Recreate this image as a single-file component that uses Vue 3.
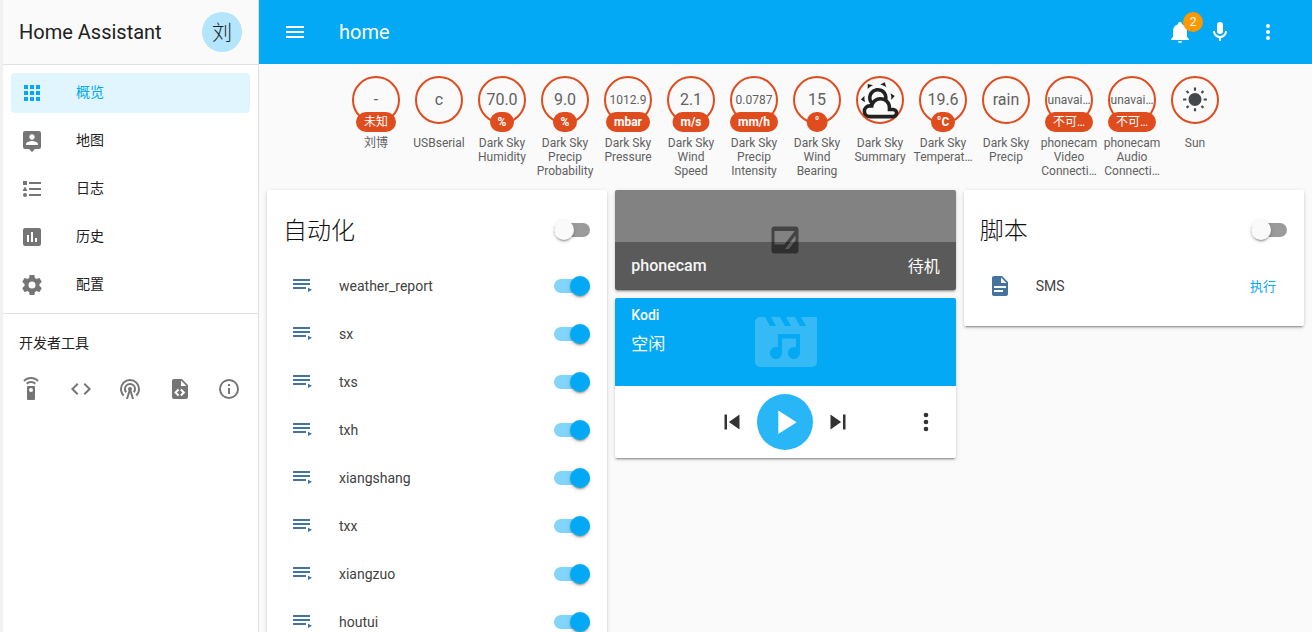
<template>
  <div class="app">
    <aside class="sidebar">
      <div class="side-head">
        <span class="brand">Home Assistant</span>
        <span class="avatar">刘</span>
      </div>
      <nav class="nav">
        <div v-for="item in navItems" :key="item.label" class="nav-item" :class="{ active: item.active }">
          <svg class="nav-icon" viewBox="0 0 24 24"><path :d="item.icon" fill-rule="evenodd" /></svg>
          <span class="nav-label">{{ item.label }}</span>
        </div>
      </nav>
      <div class="side-divider"></div>
      <div class="dev-title">开发者工具</div>
      <div class="dev-tools">
        <svg v-for="(d, i) in devIcons" :key="i" viewBox="0 0 24 24"><path :d="d" /></svg>
      </div>
    </aside>

    <main class="main">
      <header class="topbar">
        <svg class="top-icon" viewBox="0 0 24 24"><path :d="icons.menu" /></svg>
        <span class="top-title">home</span>
        <div class="top-actions">
          <div class="bell">
            <svg class="top-icon" viewBox="0 0 24 24"><path :d="icons.bell" /></svg>
            <span class="bell-count">2</span>
          </div>
          <svg class="top-icon mic" viewBox="0 0 24 24"><path :d="icons.mic" /></svg>
          <svg class="top-icon" viewBox="0 0 24 24"><path :d="icons.dots" /></svg>
        </div>
      </header>

      <section class="badges">
        <div v-for="b in badges" :key="b.name" class="badge">
          <div class="ring" :class="b.size">
            <svg v-if="b.icon" class="ring-icon" :class="b.iconClass" viewBox="0 0 24 24"><path :d="b.icon" fill-rule="evenodd" /></svg>
            <span v-else class="ring-value">{{ b.value }}</span>
            <span v-if="b.unit" class="pill" :class="b.pill">{{ b.unit }}</span>
          </div>
          <div class="badge-name" v-html="b.name"></div>
        </div>
      </section>

      <section class="columns">
        <div class="column">
          <div class="card">
            <div class="card-head">
              <span class="card-title">自动化</span>
              <span class="switch off"></span>
            </div>
            <div v-for="name in automations" :key="name" class="row">
              <svg class="row-icon" viewBox="0 0 24 24"><path :d="icons.playlist" /></svg>
              <span class="row-name">{{ name }}</span>
              <span class="switch on"></span>
            </div>
          </div>
        </div>

        <div class="column">
          <div class="card camera">
            <svg class="camera-icon" viewBox="0 0 24 24"><path :d="icons.broken" fill-rule="evenodd" /></svg>
            <div class="camera-foot">
              <span class="camera-name">phonecam</span>
              <span class="camera-state">待机</span>
            </div>
          </div>
          <div class="card media">
            <div class="media-top">
              <svg class="media-bg" viewBox="0 0 62 50"><path :d="icons.clapper" fill-rule="evenodd" /></svg>
              <div class="media-name">Kodi</div>
              <div class="media-state">空闲</div>
            </div>
            <div class="media-controls">
              <svg class="ctl" viewBox="0 0 24 24"><path :d="icons.prev" /></svg>
              <span class="play">
                <svg viewBox="0 0 24 24"><path :d="icons.play" /></svg>
              </span>
              <svg class="ctl" viewBox="0 0 24 24"><path :d="icons.next" /></svg>
              <svg class="more" viewBox="0 0 24 24"><path :d="icons.dots" /></svg>
            </div>
          </div>
        </div>

        <div class="column">
          <div class="card script">
            <div class="card-head">
              <span class="card-title">脚本</span>
              <span class="switch off"></span>
            </div>
            <div class="row">
              <svg class="row-icon" viewBox="0 0 24 24"><path :d="icons.doc" fill-rule="evenodd" /></svg>
              <span class="row-name">SMS</span>
              <span class="run">执行</span>
            </div>
          </div>
        </div>
      </section>
    </main>
  </div>
</template>

<script setup>
const icons = {
  menu: 'M3,6H21V8H3V6M3,11H21V13H3V11M3,16H21V18H3V16Z',
  bell: 'M21,19V20H3V19L5,17V11C5,7.9 7.03,5.17 10,4.29C10,4.19 10,4.1 10,4A2,2 0 0,1 12,2A2,2 0 0,1 14,4C14,4.1 14,4.19 14,4.29C16.97,5.17 19,7.9 19,11V17L21,19M14,21A2,2 0 0,1 12,23A2,2 0 0,1 10,21',
  mic: 'M12,2A3,3 0 0,1 15,5V11A3,3 0 0,1 12,14A3,3 0 0,1 9,11V5A3,3 0 0,1 12,2M19,11C19,14.53 16.39,17.44 13,17.93V21H11V17.93C7.61,17.44 5,14.53 5,11H7A5,5 0 0,0 12,16A5,5 0 0,0 17,11H19Z',
  dots: 'M12,16A2,2 0 0,1 14,18A2,2 0 0,1 12,20A2,2 0 0,1 10,18A2,2 0 0,1 12,16M12,10A2,2 0 0,1 14,12A2,2 0 0,1 12,14A2,2 0 0,1 10,12A2,2 0 0,1 12,10M12,4A2,2 0 0,1 14,6A2,2 0 0,1 12,8A2,2 0 0,1 10,6A2,2 0 0,1 12,4Z',
  playlist: 'M19,9H2V11H19V9M19,5H2V7H19V5M2,15H15V13H2V15M17,13.7V18L21,15.8L17,13.7Z',
  doc: 'M6,2H14L20,8V20A2,2 0 0,1 18,22H6C4.89,22 4,21.1 4,20V4C4,2.89 4.89,2 6,2ZM13,3.5V9H18.5ZM6,16V18H15V16ZM6,12V14H18V12Z',
  broken: 'M5,3H19A2,2 0 0,1 21,5V19A2,2 0 0,1 19,21H5A2,2 0 0,1 3,19V5A2,2 0 0,1 5,3ZM5,6V15H11.5L18.5,6ZM19,9L12,18H14.5L19,12.2Z',
  prev: 'M6,18V6H8V18H6M9.5,12L18,6V18L9.5,12Z',
  next: 'M16,18H18V6H16M6,18L14.5,12L6,6V18Z',
  play: 'M8,5.14V19.14L19,12.14L8,5.14Z',
  clapper: 'M5,0H62V45A5,5 0 0,1 57,50H5A5,5 0 0,1 0,45V5A5,5 0 0,1 5,0ZM10,0L15,9H21L16,0ZM25,0L30,9H36L31,0ZM40,0L45,9H51L46,0ZM23,17H45V36A6,6 0 1,1 41,30.3V21.5H27V36A6,6 0 1,1 23,30.3Z',
  partly: 'M12.74,5.47C15.1,6.5 16.35,9.03 15.92,11.46C17.19,12.56 18,14.19 18,16V16.17C18.31,16.06 18.65,16 19,16A3,3 0 0,1 22,19A3,3 0 0,1 19,22H6A4,4 0 0,1 2,18A4,4 0 0,1 6,14H6.27C5,12.45 4.6,10.24 5.5,8.26C6.72,5.5 9.97,4.24 12.74,5.47ZM11.93,7.3C10.16,6.5 8.09,7.31 7.31,9.07C6.85,10.09 6.93,11.22 7.41,12.13C8.5,10.83 10.16,10 12,10C12.7,10 13.38,10.12 14,10.34C13.94,9.06 13.18,7.86 11.93,7.3ZM13.55,3.64C13,3.4 12.45,3.23 11.88,3.12L14.37,1.82L15.27,4.71C14.76,4.29 14.19,3.93 13.55,3.64ZM6.09,4.44C5.6,4.79 5.17,5.19 4.8,5.63L4.91,2.82L7.87,3.5C7.25,3.75 6.65,4.05 6.09,4.44ZM18,9.71C17.91,9.12 17.78,8.55 17.59,8L19.97,9.5L17.92,11.73C18.03,11.08 18.05,10.4 18,9.71ZM3.04,11.3C3.11,11.9 3.24,12.47 3.43,13L1.06,11.5L3.1,9.28C3,9.93 2.97,10.61 3.04,11.3ZM19,20H6A2,2 0 0,1 4,18A2,2 0 0,1 6,16H8A4,4 0 0,1 12,12A4,4 0 0,1 16,16V18H19A1,1 0 0,1 20,19A1,1 0 0,1 19,20Z',
  sunny: 'M3.55,18.54L4.96,19.95L6.76,18.16L5.34,16.74M11,22.45C11.32,22.45 13,22.45 13,22.45V19.5H11M12,5.5A6,6 0 0,0 6,11.5A6,6 0 0,0 12,17.5A6,6 0 0,0 18,11.5C18,8.18 15.31,5.5 12,5.5M20,12.5H23V10.5H20M17.24,18.16L19.04,19.95L20.45,18.54L18.66,16.74M20.45,4.46L19.04,3.05L17.24,4.84L18.66,6.26M13,0.55H11V3.5H13M4,10.5H1V12.5H4M6.76,4.84L4.96,3.05L3.55,4.46L5.34,6.26L6.76,4.84Z'
}

const navItems = [
  { label: '概览', active: true, icon: 'M16,20H20V16H16M16,14H20V10H16M10,8H14V4H10M16,8H20V4H16M10,14H14V10H10M4,14H8V10H4M4,20H8V16H4M10,20H14V16H10M4,8H8V4H4V8Z' },
  { label: '地图', icon: 'M5,2H19C20.1,2 21,2.89 21,4V18A2,2 0 0,1 19,20H15L12,23L9,20H5A2,2 0 0,1 3,18V4C3,2.89 3.89,2 5,2ZM12,5.3C10.5,5.3 9.3,6.5 9.3,8C9.3,9.5 10.5,10.7 12,10.7C13.5,10.7 14.7,9.5 14.7,8C14.7,6.5 13.5,5.3 12,5.3ZM18,16V15.1C18,13.1 14,12 12,12C10,12 6,13.1 6,15.1V16Z' },
  { label: '日志', icon: 'M5,9.5L7.5,14H2.5L5,9.5M3,4H7V8H3V4M5,20A2,2 0 0,0 7,18A2,2 0 0,0 5,16A2,2 0 0,0 3,18A2,2 0 0,0 5,20M9,5V7H21V5H9M9,19H21V17H9V19M9,13H21V11H9V13Z' },
  { label: '历史', icon: 'M5,3H19C20.1,3 21,3.89 21,5V19A2,2 0 0,1 19,21H5A2,2 0 0,1 3,19V5C3,3.89 3.89,3 5,3ZM7,10V17H9V10ZM11,7V17H13V7ZM15,13V17H17V13Z' },
  { label: '配置', icon: 'M12,15.5A3.5,3.5 0 0,1 8.5,12A3.5,3.5 0 0,1 12,8.5A3.5,3.5 0 0,1 15.5,12A3.5,3.5 0 0,1 12,15.5M19.43,12.97C19.47,12.65 19.5,12.33 19.5,12C19.5,11.67 19.47,11.34 19.43,11L21.54,9.37C21.73,9.22 21.78,8.95 21.66,8.73L19.66,5.27C19.54,5.05 19.27,4.96 19.05,5.05L16.56,6.05C16.04,5.66 15.5,5.32 14.87,5.07L14.5,2.42C14.46,2.18 14.25,2 14,2H10C9.75,2 9.54,2.18 9.5,2.42L9.13,5.07C8.5,5.32 7.96,5.66 7.44,6.05L4.95,5.05C4.73,4.96 4.46,5.05 4.34,5.27L2.34,8.73C2.21,8.95 2.27,9.22 2.46,9.37L4.57,11C4.53,11.34 4.5,11.67 4.5,12C4.5,12.33 4.53,12.65 4.57,12.97L2.46,14.63C2.27,14.78 2.21,15.05 2.34,15.27L4.34,18.73C4.46,18.95 4.73,19.03 4.95,18.95L7.44,17.94C7.96,18.34 8.5,18.68 9.13,18.93L9.5,21.58C9.54,21.82 9.75,22 10,22H14C14.25,22 14.46,21.82 14.5,21.58L14.87,18.93C15.5,18.67 16.04,18.34 16.56,17.94L19.05,18.95C19.27,19.03 19.54,18.95 19.66,18.73L21.66,15.27C21.78,15.05 21.73,14.78 21.54,14.63L19.43,12.97Z' }
]

const devIcons = [
  'M12,0C8.96,0 6.21,1.23 4.22,3.22L5.63,4.63C7.26,3 9.5,2 12,2C14.5,2 16.74,3 18.36,4.64L19.77,3.23C17.79,1.23 15.04,0 12,0M7.05,6.05L8.46,7.46C9.37,6.56 10.62,6 12,6C13.38,6 14.63,6.56 15.54,7.46L16.95,6.05C15.68,4.78 13.93,4 12,4C10.07,4 8.32,4.78 7.05,6.05M12,15A2,2 0 0,1 10,13A2,2 0 0,1 12,11A2,2 0 0,1 14,13A2,2 0 0,1 12,15M15,9H9A1,1 0 0,0 8,10V22A1,1 0 0,0 9,23H15A1,1 0 0,0 16,22V10A1,1 0 0,0 15,9Z',
  'M14.6,16.6L19.2,12L14.6,7.4L16,6L22,12L16,18L14.6,16.6M9.4,16.6L4.8,12L9.4,7.4L8,6L2,12L8,18L9.4,16.6Z',
  'M12,10A2,2 0 0,1 14,12A2,2 0 0,1 12,14A2,2 0 0,1 10,12A2,2 0 0,1 12,10M12,2A10,10 0 0,1 22,12C22,14.8 20.85,17.33 19,19.14L17.6,17.71C19.08,16.26 20,14.24 20,12A8,8 0 0,0 12,4A8,8 0 0,0 4,12C4,14.24 4.92,16.26 6.4,17.71L5,19.14C3.15,17.33 2,14.8 2,12A10,10 0 0,1 12,2M12,6A6,6 0 0,1 18,12C18,13.5 17.45,14.87 16.54,15.92L15.12,14.5C15.67,13.82 16,12.95 16,12A4,4 0 0,0 12,8A4,4 0 0,0 8,12C8,12.95 8.33,13.82 8.88,14.5L7.46,15.92C6.55,14.87 6,13.5 6,12A6,6 0 0,1 12,6M11,12H13L16,22H14L12,15.5L10,22H8L11,12Z',
  'M13,9H18.5L13,3.5V9M6,2H14L20,8V20A2,2 0 0,1 18,22H6C4.89,22 4,21.1 4,20V4C4,2.89 4.89,2 6,2M6.12,15.5L9.86,19.24L11.28,17.83L8.95,15.5L11.28,13.17L9.86,11.76L6.12,15.5M17.28,15.5L13.54,11.76L12.12,13.17L14.45,15.5L12.12,17.83L13.54,19.24L17.28,15.5Z',
  'M11,9H13V7H11M12,20C7.59,20 4,16.41 4,12C4,7.59 7.59,4 12,4C16.41,4 20,7.59 20,12C20,16.41 16.41,20 12,20M12,2A10,10 0 0,0 2,12A10,10 0 0,0 12,22A10,10 0 0,0 22,12A10,10 0 0,0 12,2M11,17H13V11H11V17Z'
]

const badges = [
  { name: '刘博', value: '-', unit: '未知', pill: 'cjk' },
  { name: 'USBserial', value: 'c' },
  { name: 'Dark Sky<br>Humidity', value: '70.0', unit: '%', pill: 'tight' },
  { name: 'Dark Sky<br>Precip<br>Probability', value: '9.0', unit: '%', pill: 'tight' },
  { name: 'Dark Sky<br>Pressure', value: '1012.9', unit: 'mbar', size: 'small' },
  { name: 'Dark Sky<br>Wind<br>Speed', value: '2.1', unit: 'm/s' },
  { name: 'Dark Sky<br>Precip<br>Intensity', value: '0.0787', unit: 'mm/h', size: 'small' },
  { name: 'Dark Sky<br>Wind<br>Bearing', value: '15', unit: '°' },
  { name: 'Dark Sky<br>Summary', icon: icons.partly, iconClass: 'weather' },
  { name: 'Dark Sky<br>Temperat…', value: '19.6', unit: '°C', pill: 'tight' },
  { name: 'Dark Sky<br>Precip', value: 'rain' },
  { name: 'phonecam<br>Video<br>Connecti…', value: 'unavai…', unit: '不可…', size: 'small', pill: 'cjk' },
  { name: 'phonecam<br>Audio<br>Connecti…', value: 'unavai…', unit: '不可…', size: 'small', pill: 'cjk' },
  { name: 'Sun', icon: icons.sunny, iconClass: 'sun' }
]

const automations = ['weather_report', 'sx', 'txs', 'txh', 'xiangshang', 'txx', 'xiangzuo', 'houtui']
</script>

<style>
html, body {
  margin: 0;
  height: 100%;
  overflow: hidden;
}
</style>

<style scoped>
.app {
  display: flex;
  height: 632px;
  overflow: hidden;
  background: #fafafa;
  color: #212121;
  font-family: Roboto, "Noto Sans CJK SC", sans-serif;
  font-size: 14px;
}

.sidebar {
  width: 255px;
  flex: none;
  background: #fff;
  border-left: 3px solid #f1f1f1;
  border-right: 1px solid #e0e0e0;
}
.side-head {
  height: 65px;
  box-sizing: border-box;
  display: flex;
  align-items: center;
  justify-content: space-between;
  padding: 0 16px 1px 16px;
  background: #fafafa;
  border-bottom: 1px solid #e0e0e0;
}
.brand {
  font-size: 20px;
  color: #212121;
}
.avatar {
  width: 40px;
  height: 40px;
  border-radius: 50%;
  background: #b3e5fc;
  display: flex;
  align-items: center;
  justify-content: center;
  font-size: 20px;
  font-weight: 300;
}
.nav {
  padding-top: 4px;
}
.nav-item {
  height: 40px;
  margin: 4px 8px 8px 8px;
  display: flex;
  align-items: center;
  border-radius: 4px;
  padding-left: 9px;
  color: #212121;
}
.nav-item.active {
  background: #e1f5fe;
  color: #03a9f4;
}
.nav-icon {
  width: 24px;
  height: 24px;
  fill: #757575;
  margin-right: 32px;
}
.active .nav-icon {
  fill: #03a9f4;
}
.nav-label {
  padding-bottom: 4px;
}
.side-divider {
  height: 1px;
  background: #e0e0e0;
}
.dev-title {
  padding: 20px 0 0 16px;
  line-height: 18px;
}
.dev-tools {
  display: flex;
  justify-content: space-between;
  padding: 25px 17px 0 16px;
}
.dev-tools svg {
  width: 24px;
  height: 24px;
  fill: #757575;
}

.main {
  flex: 1;
  min-width: 0;
}
.topbar {
  height: 64px;
  display: flex;
  align-items: center;
  padding: 0 32px 0 24px;
  background: #03a9f4;
  color: #fff;
}
.top-icon {
  width: 24px;
  height: 24px;
  fill: #fff;
  display: block;
}
.top-title {
  margin-left: 32px;
  font-size: 20px;
}
.top-actions {
  margin-left: auto;
  display: flex;
  gap: 24px;
}
.mic {
  margin-left: -8px;
}
.bell {
  position: relative;
}
.bell-count {
  position: absolute;
  top: -8px;
  left: 15px;
  width: 20px;
  height: 20px;
  border-radius: 50%;
  background: #ff9800;
  font-size: 12px;
  line-height: 20px;
  text-align: center;
}

.badges {
  display: flex;
  justify-content: center;
  height: 126px;
  padding-top: 12px;
  box-sizing: border-box;
}
.badge {
  width: 63px;
  text-align: center;
}
.ring {
  position: relative;
  width: 48px;
  height: 48px;
  box-sizing: border-box;
  margin: 0 auto;
  border: 2px solid #df4c1e;
  border-radius: 50%;
  background: #fafafa;
  display: flex;
  align-items: center;
  justify-content: center;
  color: #616161;
}
.ring-value {
  font-size: 16px;
  line-height: 1;
}
.small .ring-value {
  font-size: 12px;
}
.ring-icon {
  flex: none;
}
.ring-icon.weather {
  width: 43px;
  height: 43px;
  fill: #212121;
}
.ring-icon.sun {
  width: 26px;
  height: 26px;
  fill: #44484c;
}
.pill {
  position: absolute;
  top: 34px;
  left: 50%;
  transform: translateX(-50%);
  box-sizing: border-box;
  min-width: 20px;
  height: 20px;
  padding: 0 8px;
  border-radius: 10px;
  background: #df4c1e;
  color: #fff;
  font-size: 12px;
  font-weight: 700;
  line-height: 20px;
  white-space: nowrap;
}
.pill.tight {
  min-width: 24px;
  padding: 0 5px;
}
.pill.cjk {
  font-weight: 400;
}
.badge-name {
  margin-top: 12px;
  font-size: 12px;
  line-height: 14px;
  color: #616161;
  white-space: nowrap;
}

.columns {
  display: flex;
  padding: 0 4px;
}
.column {
  flex: 1;
  min-width: 0;
  padding: 0 4px;
  display: flex;
  flex-direction: column;
  gap: 8px;
}
.card {
  background: #fff;
  border-radius: 2px;
  overflow: hidden;
  box-shadow: 0 2px 2px 0 rgba(0, 0, 0, 0.14), 0 1px 5px 0 rgba(0, 0, 0, 0.12), 0 3px 1px -2px rgba(0, 0, 0, 0.2);
}
.card-head {
  height: 72px;
  display: flex;
  align-items: center;
  justify-content: space-between;
  padding: 8px 17px 0 16px;
  box-sizing: border-box;
  font-size: 24px;
}
.card-title {
  padding-bottom: 4px;
  font-weight: 300;
  color: #111;
}
.switch {
  position: relative;
  width: 36px;
  height: 14px;
  border-radius: 7px;
  flex: none;
}
.switch::after {
  content: "";
  position: absolute;
  top: -3px;
  width: 20px;
  height: 20px;
  border-radius: 50%;
  box-shadow: 0 3px 1px -2px rgba(0, 0, 0, 0.2), 0 2px 2px 0 rgba(0, 0, 0, 0.14), 0 1px 5px 0 rgba(0, 0, 0, 0.12);
}
.switch.off {
  background: #9b9b9b;
}
.switch.off::after {
  left: 0;
  background: #fafafa;
}
.switch.on {
  background: #81d4fa;
}
.switch.on::after {
  right: 0;
  background: #03a9f4;
}
.row {
  height: 48px;
  display: flex;
  align-items: center;
  padding: 0 17px 0 24px;
}
.row-icon {
  width: 24px;
  height: 24px;
  fill: #44739e;
  flex: none;
}
.row-name {
  flex: 1;
  margin-left: 24px;
  color: #424242;
}
.script {
  height: 136px;
}
.run {
  color: #03a9f4;
  font-size: 13px;
  margin-right: 11px;
  padding-bottom: 2px;
}

.camera {
  position: relative;
  height: 100px;
  background: #828282;
}
.camera-icon {
  position: absolute;
  left: 152px;
  top: 32px;
  width: 36px;
  height: 36px;
  fill: #444;
}
.camera-foot {
  position: absolute;
  left: 0;
  right: 0;
  bottom: 0;
  height: 48px;
  display: flex;
  align-items: center;
  justify-content: space-between;
  padding: 0 16px 2px;
  box-sizing: border-box;
  background: rgba(0, 0, 0, 0.3);
  color: #f5f5f5;
  font-size: 16px;
  font-weight: 500;
}
.camera-state {
  font-weight: 400;
  color: #fff;
}
.media-top {
  position: relative;
  height: 88px;
  padding: 8px 16px;
  box-sizing: border-box;
  background: #03a9f4;
  color: #fff;
}
.media-bg {
  position: absolute;
  left: 140px;
  top: 19px;
  width: 62px;
  height: 50px;
  fill: rgba(255, 255, 255, 0.2);
}
.media-name {
  font-size: 14px;
  font-weight: 500;
  line-height: 18px;
}
.media-state {
  margin-top: 8px;
  font-size: 17px;
  line-height: 24px;
}
.media-controls {
  position: relative;
  height: 72px;
  display: flex;
  align-items: center;
  justify-content: center;
  gap: 10px;
}
.ctl {
  width: 30px;
  height: 30px;
  fill: #333;
  flex: none;
}
.play {
  width: 56px;
  height: 56px;
  border-radius: 50%;
  background: #29b6f6;
  display: flex;
  align-items: center;
  justify-content: center;
}
.play svg {
  width: 40px;
  height: 40px;
  fill: #fff;
}
.more {
  position: absolute;
  right: 16px;
  top: 22px;
  width: 28px;
  height: 28px;
  fill: #333;
}
</style>
